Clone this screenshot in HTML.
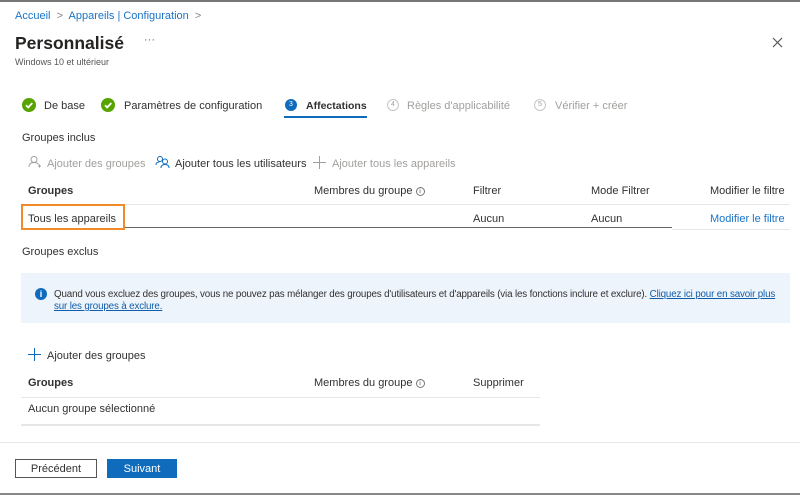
<!DOCTYPE html>
<html><head><meta charset="utf-8"><style>
*{margin:0;padding:0;box-sizing:border-box}
body{width:800px;height:495px;position:relative;background:#fff;font-family:"Liberation Sans",sans-serif;color:#323130;overflow:hidden;font-size:11px}
.a{position:absolute;white-space:nowrap}
.blue{color:#1a74c9}
.gray{color:#a19f9d}
.ln{position:absolute;height:1px;background:#e6e6e6}
.chk{position:absolute;width:14px;height:14px;border-radius:50%;background:#57a300}
.num{position:absolute;width:12px;height:12px;border-radius:50%;border:1px solid #c8c6c4;color:#a19f9d;font-size:7px;text-align:center;line-height:10px}
</style></head><body>
<div style="position:absolute;left:0;top:0;width:800px;height:2px;background:#777"></div>
<div class="a blue" style="left:15px;top:10px;font-size:11px">Accueil <span style="color:#888">&nbsp;&gt;&nbsp;</span> Appareils | Configuration <span style="color:#888">&nbsp;&gt;</span></div>
<div class="a" style="left:15px;top:33px;font-size:17.5px;font-weight:bold;color:#252423">Personnalisé</div>
<div class="a" style="left:144px;top:34px;font-size:11px;color:#666">···</div>
<div class="a" style="left:15px;top:57px;font-size:9px;color:#555">Windows 10 et ultérieur</div>
<svg class="a" style="left:772px;top:37px" width="11" height="11"><path d="M1 1L10 10M10 1L1 10" stroke="#555" stroke-width="1.2"/></svg>

<div class="chk" style="left:22px;top:98px"></div><svg class="a" style="left:22px;top:98px" width="14" height="14"><path d="M4 7.3L6.2 9.5 10.3 5" stroke="#fff" stroke-width="1.8" fill="none"/></svg>
<div class="a" style="left:44px;top:100px">De base</div>
<div class="chk" style="left:101px;top:98px"></div><svg class="a" style="left:101px;top:98px" width="14" height="14"><path d="M4 7.3L6.2 9.5 10.3 5" stroke="#fff" stroke-width="1.8" fill="none"/></svg>
<div class="a" style="left:124px;top:100px">Paramètres de configuration</div>
<div class="a" style="left:285px;top:99px;width:12px;height:12px;border-radius:50%;background:#0f6cbd;color:#fff;font-size:7px;text-align:center;line-height:12px">3</div>
<div class="a" style="left:306px;top:100px;font-weight:bold;font-size:10.5px">Affectations</div>
<div style="position:absolute;left:284px;top:116px;width:83px;height:2px;background:#0f6cbd"></div>
<div class="num" style="left:387px;top:99px">4</div>
<div class="a gray" style="left:407px;top:100px">Règles d'applicabilité</div>
<div class="num" style="left:534px;top:99px">5</div>
<div class="a gray" style="left:555px;top:100px">Vérifier + créer</div>

<div class="a" style="left:22px;top:132px">Groupes inclus</div>
<svg class="a" style="left:28px;top:155px" width="14" height="14"><circle cx="6" cy="4.5" r="3" stroke="#a19f9d" fill="none"/><path d="M1 12c0-3 2-4.5 5-4.5s4 1 4.5 2M10 11h3M11.5 9.5v3" stroke="#a19f9d" fill="none"/></svg>
<div class="a gray" style="left:47px;top:158px">Ajouter des groupes</div>
<svg class="a" style="left:155px;top:155px" width="15" height="14"><circle cx="5" cy="4" r="2.5" stroke="#0f6cbd" fill="none"/><circle cx="10" cy="6.5" r="2.5" stroke="#0f6cbd" fill="none"/><path d="M6 13c0-2.5 1.5-3.5 4-3.5s4 1 4 3.5M1 10c0-2 1.5-3 3.5-3" stroke="#0f6cbd" fill="none"/></svg>
<div class="a" style="left:175px;top:158px">Ajouter tous les utilisateurs</div>
<svg class="a" style="left:313px;top:156px" width="13" height="13"><path d="M6.5 0V13M0 6.5H13" stroke="#a19f9d"/></svg>
<div class="a gray" style="left:332px;top:158px">Ajouter tous les appareils</div>

<div class="a" style="left:28px;top:185px;font-weight:600">Groupes</div>
<div class="a" style="left:314px;top:185px">Membres du groupe <span style="display:inline-block;width:9px;height:9px;border:1px solid #777;border-radius:50%;font-size:6px;text-align:center;line-height:8px;vertical-align:middle">i</span></div>
<div class="a" style="left:473px;top:185px">Filtrer</div>
<div class="a" style="left:591px;top:185px">Mode Filtrer</div>
<div class="a" style="left:710px;top:185px">Modifier le filtre</div>
<div class="ln" style="left:22px;top:204px;width:768px"></div>
<div class="a" style="left:28px;top:213px">Tous les appareils</div>
<div class="a" style="left:473px;top:213px">Aucun</div>
<div class="a" style="left:591px;top:213px">Aucun</div>
<div class="a blue" style="left:710px;top:213px">Modifier le filtre</div>
<div style="position:absolute;left:124px;top:227px;width:548px;height:1px;background:#666"></div>
<div class="ln" style="left:672px;top:229px;width:118px"></div>
<div style="position:absolute;left:21px;top:204px;width:104px;height:26px;border:2px solid #f08a2a"></div>

<div class="a" style="left:22px;top:246px">Groupes exclus</div>
<div style="position:absolute;left:21px;top:273px;width:769px;height:50px;background:#eef4fc"></div>
<div class="a" style="left:35px;top:288px;width:12px;height:12px;border-radius:50%;background:#0f6cbd;color:#fff;font-size:9px;font-weight:bold;text-align:center;line-height:12px">i</div>
<div class="a" style="left:54px;top:289px;font-size:9.8px;letter-spacing:-0.15px">Quand vous excluez des groupes, vous ne pouvez pas mélanger des groupes d'utilisateurs et d'appareils (via les fonctions inclure et exclure). <span style="color:#0f5ca8;text-decoration:underline">Cliquez ici pour en savoir plus</span></div>
<div class="a" style="left:54px;top:301px;font-size:9.8px;color:#0f5ca8;text-decoration:underline;letter-spacing:-0.15px">sur les groupes à exclure.</div>

<svg class="a" style="left:28px;top:348px" width="13" height="13"><path d="M6.5 0V13M0 6.5H13" stroke="#0f6cbd"/></svg>
<div class="a" style="left:47px;top:350px">Ajouter des groupes</div>
<div class="a" style="left:28px;top:377px;font-weight:600">Groupes</div>
<div class="a" style="left:314px;top:377px">Membres du groupe <span style="display:inline-block;width:9px;height:9px;border:1px solid #777;border-radius:50%;font-size:6px;text-align:center;line-height:8px;vertical-align:middle">i</span></div>
<div class="a" style="left:473px;top:377px">Supprimer</div>
<div class="ln" style="left:21px;top:397px;width:519px"></div>
<div class="a" style="left:28px;top:403px">Aucun groupe sélectionné</div>
<div class="ln" style="left:21px;top:424px;width:519px;height:2px"></div>
<div class="ln" style="left:0;top:442px;width:800px"></div>
<div class="a" style="left:15px;top:459px;width:82px;height:19px;border:1px solid #555;text-align:center;line-height:18px">Précédent</div>
<div class="a" style="left:107px;top:459px;width:70px;height:19px;background:#0f6cbd;color:#fff;text-align:center;line-height:20px">Suivant</div>
<div style="position:absolute;left:0;top:493px;width:800px;height:2px;background:#888"></div>
</body></html>
